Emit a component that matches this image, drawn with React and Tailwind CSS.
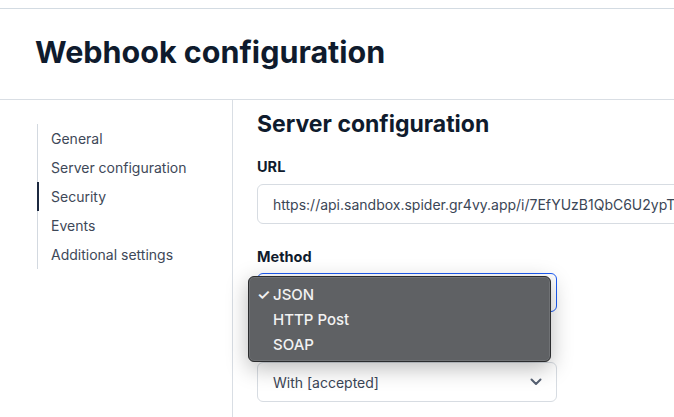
import React from "react";

const items = ["General", "Server configuration", "Security", "Events", "Additional settings"];

function Chevron() {
  return (
    <svg width="12" height="8" viewBox="0 0 12 8" fill="none">
      <path d="M1.5 1.5L6 6L10.5 1.5" stroke="#566173" strokeWidth="2" strokeLinecap="round" strokeLinejoin="round" />
    </svg>
  );
}

export default function App() {
  return (
    <div className="w-[674px] h-[417px] bg-white overflow-hidden font-['Inter',sans-serif] text-[#0f1b2d]">
      <div className="h-2" />
      <div className="border-t border-[#d3dbe2] h-[91px] flex items-center pl-[35px]">
        <h1 className="text-[30.5px] font-bold leading-none mb-[4px]">Webhook configuration</h1>
      </div>
      <div className="border-t border-[#d9dee4] flex h-[318px]">
        <aside className="w-[233px] shrink-0 border-r border-[#d9dee4] pl-[37px] pt-[24px]">
          <nav className="flex flex-col">
            {items.map((it) => (
              <div
                key={it}
                className={
                  "h-[29px] flex items-center text-[14px] text-[#3e4858] " +
                  (it === "Security"
                    ? "border-l-2 border-[#1c2940] pl-[12px]"
                    : "border-l border-[#d3d9e0] pl-[13px]")
                }
              >
                {it}
              </div>
            ))}
          </nav>
        </aside>
        <main className="flex-1 min-w-0 pl-[24px] pt-[10px]">
          <h2 className="text-[23px] leading-[28px] font-bold">Server configuration</h2>
          <div className="mt-[19px] text-[14.5px] leading-[20px] font-bold">URL</div>
          <div className="mt-[7px] h-[40px] w-[460px] border border-[#d7dce2] rounded-[6px] flex items-center pl-[15px] overflow-hidden">
            <span className="text-[14px] text-[#3b4656] whitespace-nowrap">
              https://api.sandbox.spider.gr4vy.app/i/7EfYUzB1QbC6U2ypT
            </span>
          </div>
          <div className="mt-[23px] text-[14.5px] leading-[20px] font-bold">Method</div>
          <div className="relative mt-[6px] w-[300px]">
            <div className="h-[39px] border border-[#1d5cf5] rounded-[6px] bg-white" />
            <div className="h-[50px]" />
            <div className="h-[40px] border border-[#d7dce2] rounded-[6px] flex items-center justify-between pl-[15px] pr-[14px]">
              <span className="text-[14px] text-[#3b4656]">With [accepted]</span>
              <Chevron />
            </div>
            <div className="absolute left-[-9px] top-[3px] w-[303px] h-[86px] rounded-[6px] bg-[#5f6164] border border-[#2b2c2e] shadow-[0_6px_22px_rgba(0,0,0,0.28)] ring-1 ring-inset ring-[#707275] py-[6px]">
              <div className="h-[25px] flex items-center text-[15px] font-medium text-[#f2f2f2]">
                <span className="w-[24px] pl-[8px] text-[15px] font-semibold">✓</span>
                <span>JSON</span>
              </div>
              <div className="h-[25px] flex items-center text-[15px] font-medium text-[#f2f2f2] pl-[24px]">HTTP Post</div>
              <div className="h-[25px] flex items-center text-[15px] font-medium text-[#f2f2f2] pl-[24px]">SOAP</div>
            </div>
          </div>
        </main>
      </div>
    </div>
  );
}
